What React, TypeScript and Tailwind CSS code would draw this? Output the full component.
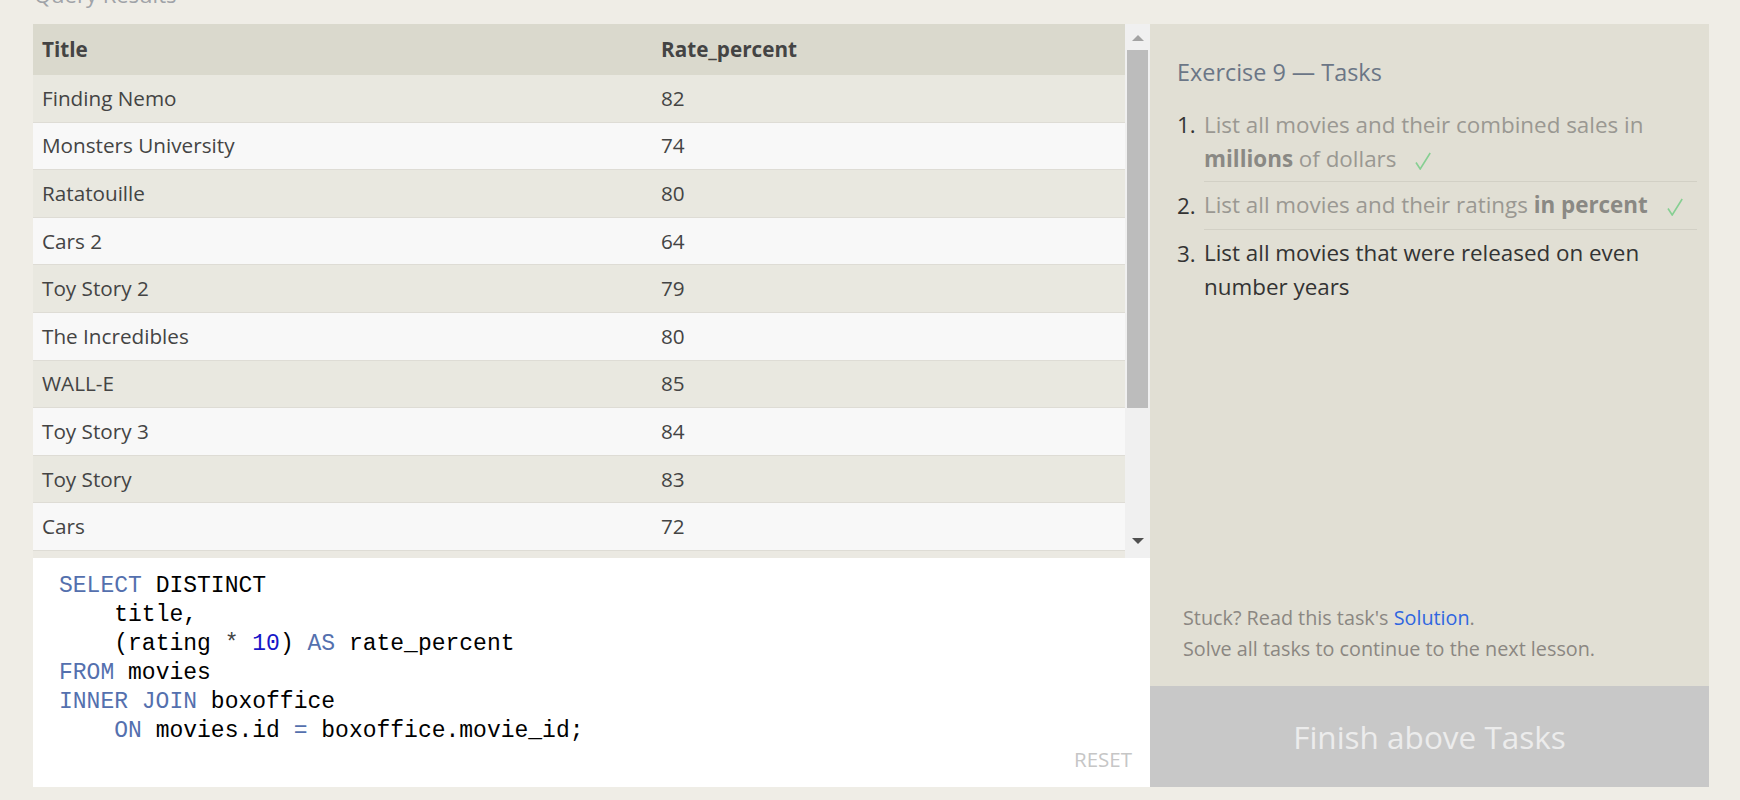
const rows = [
  ['Finding Nemo', '82'],
  ['Monsters University', '74'],
  ['Ratatouille', '80'],
  ['Cars 2', '64'],
  ['Toy Story 2', '79'],
  ['The Incredibles', '80'],
  ['WALL-E', '85'],
  ['Toy Story 3', '84'],
  ['Toy Story', '83'],
  ['Cars', '72'],
];

function Kw({ children }: { children: React.ReactNode }) {
  return <span className="text-[#5470ae]">{children}</span>;
}

function Check() {
  return (
    <svg className="ml-[19px] inline-block" width="16" height="18" viewBox="0 0 16 18" fill="none">
      <path d="M1 10.5 L5.2 17 L15.2 1" stroke="#86cf92" strokeWidth="1.6" />
    </svg>
  );
}

function ResultsTable() {
  return (
    <div className="flex h-[534px] bg-[#ebe9e2]">
      <div className="w-[1092px] text-[20.7px] text-[#444]">
        <div className="grid h-[51px] grid-cols-[619px_1fr] items-center bg-[#dad9cd] font-bold">
          <div className="pl-[9px]">Title</div>
          <div className="pl-[9px]">Rate_percent</div>
        </div>
        {rows.map(([title, rate], i) => (
          <div
            key={title}
            className={`grid h-[47.6px] grid-cols-[619px_1fr] items-center border-b border-[#dedcd5] ${
              i % 2 === 0 ? 'bg-[#e9e8e0]' : 'bg-[#f8f8f8]'
            }`}
          >
            <div className="pl-[9px]">{title}</div>
            <div className="pl-[9px]">{rate}</div>
          </div>
        ))}
      </div>
      <div className="flex w-[25px] flex-col bg-[#f0f0f0]">
        <div className="flex h-[26px] items-center justify-center pt-[2px]">
          <div className="h-0 w-0 border-x-[6px] border-b-[6px] border-x-transparent border-b-[#a3a3a3]" />
        </div>
        <div className="mx-[2px] h-[358px] bg-[#bcbcbc]" />
        <div className="flex-1" />
        <div className="flex h-[30px] items-center justify-center pb-[4px]">
          <div className="h-0 w-0 border-x-[6px] border-t-[6px] border-x-transparent border-t-[#505050]" />
        </div>
      </div>
    </div>
  );
}

function Editor() {
  return (
    <div className="relative h-[229px] bg-white">
      <pre className="pl-[26px] pt-[14px] font-['Liberation_Mono',monospace] text-[23px] leading-[29px] text-black">
        <Kw>SELECT</Kw> DISTINCT{'\n'}
        {'    '}title,{'\n'}
        {'    '}(rating <span className="text-[#444]">*</span> <span className="text-[#1616c8]">10</span>) <Kw>AS</Kw> rate_percent{'\n'}
        <Kw>FROM</Kw> movies{'\n'}
        <Kw>INNER JOIN</Kw> boxoffice{'\n'}
        {'    '}<Kw>ON</Kw> movies.id <Kw>=</Kw> boxoffice.movie_id;
      </pre>
      <div className="absolute bottom-[12px] right-[18px] text-[20.5px] text-[#c6c6c6]">RESET</div>
    </div>
  );
}

function TasksPanel() {
  return (
    <div className="flex w-[559px] flex-col bg-[#e1dfd4]">
      <div className="flex-1 pl-[27px] pr-[12px] pt-[33px]">
        <h3 className="text-[23.4px] leading-[30px] text-[#6b7686]">Exercise 9 — Tasks</h3>
        <ol className="mt-[20px] text-[22.4px] leading-[34px]">
          <li className="flex">
            <span className="w-[27px] pt-[1px] text-[#333]">1.</span>
            <div className="flex-1 border-b border-[#d2d0c5] pb-[5px] pt-[1px] text-[#9a9892]">
              List all movies and their combined sales in <b className="text-[#8a8984]">millions</b> of dollars
              <Check />
            </div>
          </li>
          <li className="flex">
            <span className="w-[27px] py-[7px] text-[#333]">2.</span>
            <div className="flex-1 border-b border-[#d2d0c5] py-[6px] text-[#9a9892]">
              List all movies and their ratings <b className="text-[#8a8984]">in percent</b>
              <Check />
            </div>
          </li>
          <li className="flex">
            <span className="w-[27px] py-[7px] text-[#333]">3.</span>
            <div className="flex-1 py-[6px] text-[#333]">List all movies that were released on even number years</div>
          </li>
        </ol>
      </div>
      <div className="pb-[22px] pl-[33px] text-[19.8px] leading-[31px] text-[#8b8782]">
        <p>
          Stuck? Read this task's <span className="text-[#2f66e0]">Solution</span>.
        </p>
        <p>Solve all tasks to continue to the next lesson.</p>
      </div>
      <div className="flex h-[101px] items-center justify-center bg-[#c8c8c8] text-[31.5px] text-[#ececec]">
        Finish above Tasks
      </div>
    </div>
  );
}

export default function App() {
  return (
    <div className="h-[800px] overflow-hidden bg-[#efede6] font-['Open_Sans',sans-serif]">
      <div className="flex h-[24px] items-start pl-[34px]">
        <h2 className="-mt-[20px] text-[22px] leading-[28px] text-[#a0a3a8]">Query Results</h2>
      </div>
      <div className="ml-[33px] flex w-[1677px]">
        <div className="w-[1117px]">
          <ResultsTable />
          <Editor />
        </div>
        <TasksPanel />
      </div>
    </div>
  );
}
